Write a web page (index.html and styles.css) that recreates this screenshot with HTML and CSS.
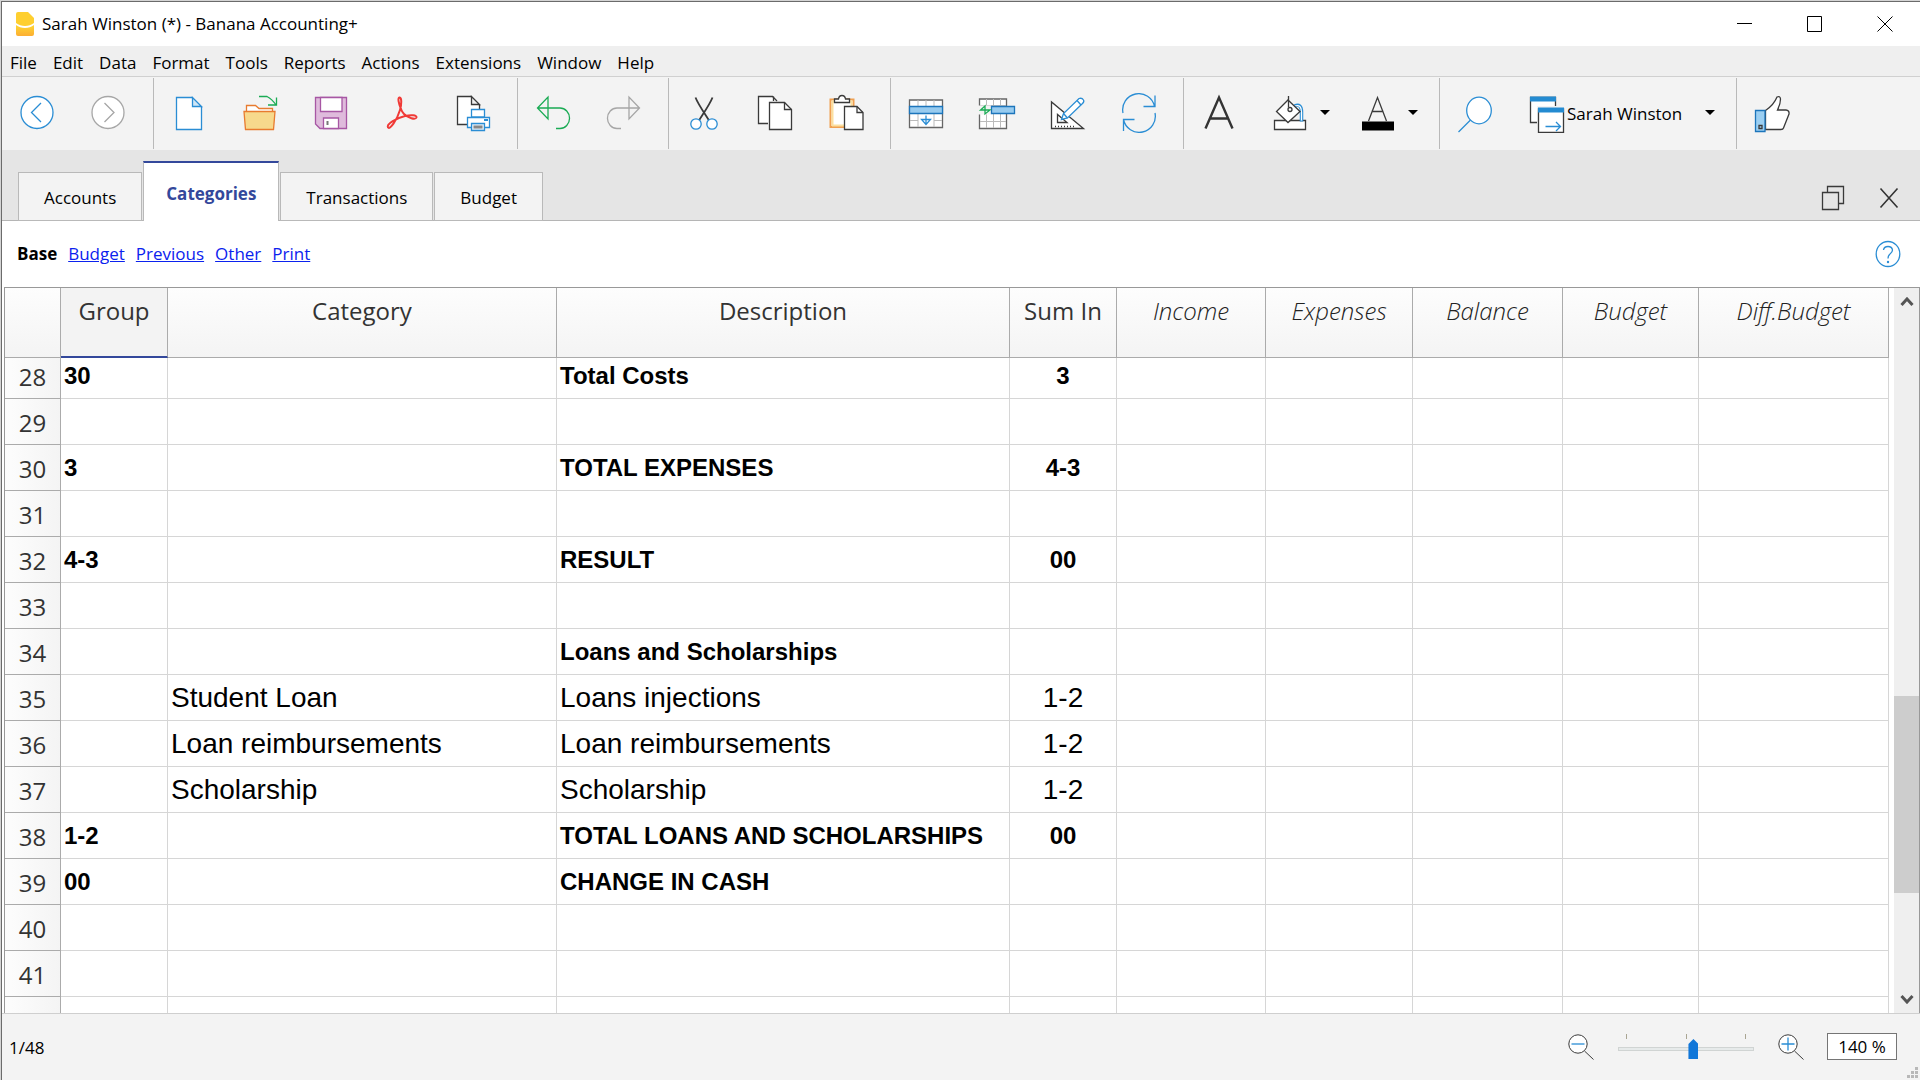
FILE: index.html
```html
<!DOCTYPE html>
<html lang="en">
<head>
<meta charset="utf-8">
<title>Sarah Winston (*) - Banana Accounting+</title>
<link rel="stylesheet" href="styles.css">
</head>
<body>
<div class="window">
  <header class="titlebar">
    <svg class="app-logo" width="18" height="24" viewBox="0 0 18 24" aria-hidden="true">
      <defs><linearGradient id="logo" x1="0" y1="0" x2="0" y2="1"><stop offset="0" stop-color="#fed732"/><stop offset="1" stop-color="#fcae33"/></linearGradient></defs>
      <path d="M2 0H12L18 6V11C13 15 5 15 0 11V2Q0 0 2 0Z" fill="#fecf30"/>
      <path d="M0 13C5 17 13 17 18 13V22Q18 24 16 24H2Q0 24 0 22Z" fill="url(#logo)"/>
    </svg>
    <h1 class="title">Sarah Winston (*) - Banana Accounting+</h1>
    <div class="window-controls">
      <button type="button" aria-label="Minimize"><svg width="16" height="16" viewBox="0 0 16 16"><path d="M0 7.5H15" /></svg></button>
      <button type="button" aria-label="Maximize"><svg width="16" height="16" viewBox="0 0 16 16"><path d="M.5 .5H14.5V15.5H.5Z"/></svg></button>
      <button type="button" aria-label="Close"><svg width="16" height="16" viewBox="0 0 16 16"><path d="M.5 .5L15.5 15.5M15.5 .5L.5 15.5"/></svg></button>
    </div>
  </header>

  <nav class="menubar" aria-label="Main menu">
    <button type="button">File</button><button type="button">Edit</button><button type="button">Data</button><button type="button">Format</button><button type="button">Tools</button><button type="button">Reports</button><button type="button">Actions</button><button type="button">Extensions</button><button type="button">Window</button><button type="button">Help</button>
  </nav>

  <div class="toolbar" role="toolbar" aria-label="Tools">
    <div class="group">
      <button class="tool" type="button" aria-label="Back"><svg viewBox="0 0 40 40"><g class="blue"><circle cx="20" cy="19.500" r="16" fill="#fff"/><path d="M24 10L14.500 19.500L24 29"/></g></svg></button>
      <button class="tool" type="button" aria-label="Forward"><svg viewBox="0 0 40 40"><g class="gray"><circle cx="20" cy="19.500" r="16" fill="#fff"/><path d="M16.500 10L26 19.500L16.500 29"/></g></svg></button>
    </div>
    <div class="group">
      <button class="tool" type="button" aria-label="New"><svg viewBox="0 0 40 40"><path class="blue" fill="#fff" d="M7.500 4.500H23L32.500 14V36.500H7.500Z"/><path class="blue" fill="#cfe6f6" d="M23.500 4.500V13.500H32.500Z"/></svg></button>
      <button class="tool" type="button" aria-label="Open"><svg viewBox="0 0 40 40"><path class="orange" fill="#fff" d="M6.500 18V12.500H15.500L19 15.500H32.500V19"/><path class="orange" fill="#f7d98c" d="M4 18.500H35L33.500 36.500H5.500Z"/><path class="green" d="M19 3.500H27Q32 6 36 12M28 12H36.500V4.500"/></svg></button>
      <button class="tool" type="button" aria-label="Save"><svg viewBox="0 0 40 40"><path class="purple" fill="#dfbbdc" d="M4.500 4.500H35.500V35.500H9L4.500 31Z"/><path class="purple" fill="#fff" d="M9.500 4.500H31V18.500H9.500Z"/><path class="purple" fill="#fff" d="M12.500 25H27.500V35.500H12.500Z"/><path d="M15.500 28h2v4h-2z" fill="#777"/></svg></button>
      <button class="tool" type="button" aria-label="Export to PDF"><svg viewBox="0 0 40 40"><path class="red" d="M19 16C16.500 10 15.500 5 17.500 4.500C20 4 19.500 12 18 17C15 27 8 37 6 34.500C4 31 15 25 23 23C29 21.500 35 22 34.500 24.500C33.500 27 26 25 22 21C20.500 19.500 19.500 17.500 19 16Z"/></svg></button>
      <button class="tool" type="button" aria-label="Print"><svg viewBox="0 0 40 40"><path class="dark" fill="#fff" d="M4.500 3.500H18L26.500 12V31.500H4.500Z"/><path class="dark" fill="#eee" d="M18.500 3.500V11.500H26.500Z"/><g class="blue"><path fill="#fff" d="M18.500 16.500H31.500V24H18.500ZM14.500 24.500H36.500V34.500H14.500Z"/><path fill="#e2eef7" d="M18.500 30.500H31.500V37.500H18.500Z"/><path d="M31 27H35" stroke-width="2"/></g><path d="M20.500 32.500h9v3h-9z" fill="#888"/></svg></button>
    </div>
    <div class="group">
      <button class="tool" type="button" aria-label="Undo"><svg viewBox="0 0 40 40"><path class="green" d="M15 4V26L4.500 15ZM4.500 15H27A9.500 10.200 0 0 1 27 35.500H23"/></svg></button>
      <button class="tool" type="button" aria-label="Redo"><svg viewBox="0 0 40 40"><path class="gray" d="M25 4V26L35.500 15ZM35.500 15H13A9.500 10.200 0 0 0 13 35.500H17"/></svg></button>
    </div>
    <div class="group">
      <button class="tool" type="button" aria-label="Cut"><svg viewBox="0 0 40 40"><path class="dark thick" d="M11.500 4.500C14 11 21 21 25 27.500M28.500 4.500C26 11 19 21 15 27.500"/><g class="blue"><circle cx="12" cy="31" r="5.200" fill="#fff"/><circle cx="28" cy="31" r="5.200" fill="#fff"/></g></svg></button>
      <button class="tool" type="button" aria-label="Copy"><svg viewBox="0 0 40 40"><g class="dark"><path fill="#fff" d="M13 30.500H3.500V3.500H17.500L22 8"/><path d="M18.500 3.500V8"/><path fill="#fff" d="M14.500 9.500H29.500L36.500 16.500V36.500H14.500Z"/><path d="M29.500 9.500V16.500H36.500"/></g></svg></button>
      <button class="tool" type="button" aria-label="Paste"><svg viewBox="0 0 40 40"><path d="M4.500 6.500H27.500V34H4.500Z" fill="#fff" stroke="#f0a050" stroke-width="2"/><path d="M6.500 32.500V8.500H25.500V13M6 32.500H18" fill="none" stroke="#fbe0a0" stroke-width="2"/><g class="dark"><path fill="#fff" d="M8.500 9.500V6H12.500Q13 2.500 16 2.500T19.500 6H23.500V9.500Z"/><path fill="#fff" d="M18.500 13.500H31L37 19.500V36.500H18.500Z"/><path d="M31 13.500V19.500H37"/></g></svg></button>
    </div>
    <div class="group">
      <button class="tool" type="button" aria-label="Insert rows"><svg viewBox="0 0 40 40"><path class="mid" fill="#fff" d="M3.500 7H36.500V34.500H3.500Z"/><path class="soft" d="M12 7V13M20 7V13M28 7V13M12 21V34M28 21V34M4 27.500H12M28 27.500H36"/><path d="M3.500 13.500H36.500V20.500H3.500Z" fill="#97cbef" stroke="#1c75bb" stroke-width="1.300"/><path class="blue" d="M20 22.500V31.500M15.500 26.500H24.500L20 31.500Z"/></svg></button>
      <button class="tool" type="button" aria-label="Shift cells"><svg viewBox="0 0 40 40"><path class="mid" fill="#fff" d="M2.500 6H29.500V35.500H2.500Z"/><path class="soft" d="M9.500 6V35M16.500 6V35M23.500 6V35M3 12.500H29M3 28.500H29"/><path d="M1 12.500h13v9H1z" fill="#f3f3f3"/><path d="M14.500 13.500H37.500V20.500H14.500Z" fill="#97cbef" stroke="#1c75bb" stroke-width="1.300"/><path class="green" d="M13 17H3.500L8 13V21Z"/></svg></button>
      <button class="tool" type="button" aria-label="Edit layout"><svg viewBox="0 0 40 40"><path class="dark" fill="#fff" d="M3.500 9V35.500H35.500Z"/><path class="dark" d="M9.500 21.500V29.500H19Z"/><path class="dark" d="M7 33.500H26" stroke-dasharray="1 2"/><path class="blue" fill="#fff" d="M13.500 26.500L15.500 20.500L31 5.500Q34 4.500 35.500 7Q36.500 8.500 34.500 10.500L19.500 25Z"/><path class="blue" d="M15.500 20.500L19.500 25M29 7.500L33 12"/></svg></button>
      <button class="tool" type="button" aria-label="Recalculate"><svg viewBox="0 0 40 40"><path class="blue" d="M4 20A16 16 0 0 1 35.500 13.500M24.500 13.500H36V2.500M36 20A16 16 0 0 1 4.500 26.500M15.500 26.500H4.500V38"/></svg></button>
    </div>
    <div class="group">
      <button class="tool" type="button" aria-label="Font"><svg viewBox="0 0 40 40"><path d="M6.500 35.500L20 4.500L33.500 35.500M11.500 25.500H28.500" fill="none" stroke="#333" stroke-width="2.400"/></svg></button>
      <button class="tool split" type="button" aria-label="Background colour"><svg viewBox="0 0 40 40"><path class="dark" fill="#fff" d="M4.500 27.500H35.500V36.500H4.500Z"/><path d="M24.500 13Q31.500 10 31.500 19V28.500" fill="none" stroke="#2a8dd4" stroke-width="3.500"/><path d="M25 13Q31.500 11 31.500 19V27.500" fill="none" stroke="#fff" stroke-width="1.300"/><path class="dark" fill="#fff" d="M18 7L30 18.500L18 29.500L6.500 18.500Z"/><path class="dark" d="M18.500 3V14.500"/><circle class="dark" cx="20" cy="16.500" r="2"/></svg><i class="caret"></i></button>
      <button class="tool split" type="button" aria-label="Text colour"><svg viewBox="0 0 40 40"><path class="dark" d="M10.500 28L19.500 4.500L28.500 28M13.500 18.500H25.500"/><path d="M4 28.500H36V37.500H4Z" fill="#000"/></svg><i class="caret"></i></button>
    </div>
    <div class="group">
      <button class="tool" type="button" aria-label="Search"><svg viewBox="0 0 40 40"><g class="blue"><ellipse cx="24" cy="17.500" rx="12.300" ry="13.300" fill="#fff"/><path d="M15.500 27L3.500 39"/></g></svg></button>
      <button class="tool window-switch" type="button"><svg viewBox="0 0 40 40"><path class="dark" fill="#fff" d="M4.500 4.500H29.500V29.500H4.500Z"/><path d="M4 3.500H30V8.500H4Z" fill="#248bd1"/><path d="M11 13H39V40H11Z" fill="#f3f3f3"/><path class="dark" fill="#fff" d="M12.500 16H37.500V39.500H12.500Z"/><path d="M12 14.500H38V19.500H12Z" fill="#248bd1"/><path class="blue" d="M19.500 33.500H34.500M30 29L34.500 33.500L30 38"/></svg><span>Sarah Winston</span><i class="caret"></i></button>
    </div>
    <div class="group">
      <button class="tool" type="button" aria-label="Feedback"><svg viewBox="0 0 40 40"><path class="dark" fill="#fff" d="M13.500 17.500C18 14.500 23 9 25 4Q28 2.500 28.500 6Q28.500 11 25.500 17H34Q37.500 17.500 37 21L31.500 35Q31 36.500 29 36.500H13.500Z"/><path d="M3.500 17.500H13V38.500H3.500Z" fill="#9bcff2" stroke="#1c75bb" stroke-width="1.300"/><path class="dark" d="M7 32.500h3v3h-3z"/></svg></button>
    </div>
  </div>

  <div class="tabbar">
    <div class="tabs" role="tablist">
      <button type="button" role="tab">Accounts</button><button type="button" role="tab" class="active" aria-selected="true">Categories</button><button type="button" role="tab">Transactions</button><button type="button" role="tab">Budget</button>
    </div>
    <div class="tab-controls">
      <button type="button" aria-label="Restore"><svg width="24" height="26" viewBox="0 0 24 26"><path class="dark" d="M1.500 7.500H17.500V24.500H1.500ZM6.500 7V1.500H22.500V18.500H18"/></svg></button>
      <button type="button" aria-label="Close table"><svg width="20" height="22" viewBox="0 0 20 22"><path d="M1.500 1.500L18.500 20.500M18.500 1.500L1.500 20.500" fill="none" stroke="#333" stroke-width="1.600"/></svg></button>
    </div>
  </div>

  <main class="content">
    <nav class="views" aria-label="Views">
      <strong>Base</strong>
      <a href="#budget">Budget</a>
      <a href="#previous">Previous</a>
      <a href="#other">Other</a>
      <a href="#print">Print</a>
      <button class="help" type="button" aria-label="Help"><svg width="26" height="28" viewBox="0 0 26 28"><g class="blue"><ellipse cx="13" cy="14" rx="11.800" ry="12.500"/><path d="M8.500 10Q9 6.500 13 6.500T17.500 10Q17.500 12 15 14Q13 15.500 13 18.500"/></g><circle cx="13" cy="22" r="1.200" fill="#2a8dd4"/></svg></button>
    </nav>

    <div class="sheet">
      <div class="viewport">
        <table>
          <colgroup><col class="c-num"><col class="c-group"><col class="c-category"><col><col class="c-sum"><col class="c-income"><col class="c-expenses"><col class="c-balance"><col class="c-budget"><col class="c-diff"></colgroup>
          <thead>
            <tr><th class="corner"></th><th class="current" scope="col">Group</th><th scope="col">Category</th><th scope="col">Description</th><th scope="col">Sum In</th><th class="calc" scope="col">Income</th><th class="calc" scope="col">Expenses</th><th class="calc" scope="col">Balance</th><th class="calc" scope="col">Budget</th><th class="calc" scope="col">Diff.Budget</th></tr>
          </thead>
          <tbody>
            <tr class="bold clipped"><th scope="row">28</th><td>30</td><td></td><td>Total Costs</td><td class="mid-cell">3</td><td></td><td></td><td></td><td></td><td></td></tr>
            <tr><th scope="row">29</th><td></td><td></td><td></td><td></td><td></td><td></td><td></td><td></td><td></td></tr>
            <tr class="bold"><th scope="row">30</th><td>3</td><td></td><td>TOTAL EXPENSES</td><td class="mid-cell">4-3</td><td></td><td></td><td></td><td></td><td></td></tr>
            <tr><th scope="row">31</th><td></td><td></td><td></td><td></td><td></td><td></td><td></td><td></td><td></td></tr>
            <tr class="bold"><th scope="row">32</th><td>4-3</td><td></td><td>RESULT</td><td class="mid-cell">00</td><td></td><td></td><td></td><td></td><td></td></tr>
            <tr><th scope="row">33</th><td></td><td></td><td></td><td></td><td></td><td></td><td></td><td></td><td></td></tr>
            <tr class="bold"><th scope="row">34</th><td></td><td></td><td>Loans and Scholarships</td><td></td><td></td><td></td><td></td><td></td><td></td></tr>
            <tr><th scope="row">35</th><td></td><td>Student Loan</td><td>Loans injections</td><td class="mid-cell">1-2</td><td></td><td></td><td></td><td></td><td></td></tr>
            <tr><th scope="row">36</th><td></td><td>Loan reimbursements</td><td>Loan reimbursements</td><td class="mid-cell">1-2</td><td></td><td></td><td></td><td></td><td></td></tr>
            <tr><th scope="row">37</th><td></td><td>Scholarship</td><td>Scholarship</td><td class="mid-cell">1-2</td><td></td><td></td><td></td><td></td><td></td></tr>
            <tr class="bold"><th scope="row">38</th><td>1-2</td><td></td><td>TOTAL LOANS AND SCHOLARSHIPS</td><td class="mid-cell">00</td><td></td><td></td><td></td><td></td><td></td></tr>
            <tr class="bold"><th scope="row">39</th><td>00</td><td></td><td>CHANGE IN CASH</td><td></td><td></td><td></td><td></td><td></td><td></td></tr>
            <tr><th scope="row">40</th><td></td><td></td><td></td><td></td><td></td><td></td><td></td><td></td><td></td></tr>
            <tr><th scope="row">41</th><td></td><td></td><td></td><td></td><td></td><td></td><td></td><td></td><td></td></tr>
            <tr><th scope="row">42</th><td></td><td></td><td></td><td></td><td></td><td></td><td></td><td></td><td></td></tr>
          </tbody>
        </table>
      </div>
      <div class="scrollbar">
        <button type="button" aria-label="Scroll up"><svg width="14" height="10" viewBox="0 0 14 10"><path d="M1.500 8L7 2L12.500 8"/></svg></button>
        <div class="track-before"></div><div class="thumb"></div><div class="track-after"></div>
        <button type="button" aria-label="Scroll down"><svg width="14" height="10" viewBox="0 0 14 10"><path d="M1.500 2L7 8L12.500 2"/></svg></button>
      </div>
    </div>
  </main>

  <footer class="statusbar">
    <span class="position">1/48</span>
    <button class="zoom-btn" type="button" aria-label="Zoom out"><svg width="26" height="26" viewBox="0 0 26 26"><circle class="dark thin" cx="10" cy="10" r="9.200" fill="#fff"/><path class="dark thin" d="M16.500 17L25.500 25.500"/><path class="blue" d="M3.500 10H16.500"/></svg></button>
    <div class="zoom-slider">
      <div class="ticks"><i></i><i></i><i></i></div>
      <input type="range" min="0" max="100" value="56" aria-label="Zoom">
    </div>
    <button class="zoom-btn" type="button" aria-label="Zoom in"><svg width="26" height="26" viewBox="0 0 26 26"><circle class="dark thin" cx="10" cy="10" r="9.200" fill="#fff"/><path class="dark thin" d="M16.500 17L25.500 25.500"/><path class="blue" d="M3.500 10H16.500M10 3.500V16.500"/></svg></button>
    <input class="zoom-value" type="text" value="140 %" aria-label="Zoom level">
    <svg class="grip" width="12" height="12" viewBox="0 0 12 12" aria-hidden="true"><path fill="#b8b8b8" d="M8 0h3v3H8zM4 4h3v3H4zM8 4h3v3H8zM0 8h3v3H0zM4 8h3v3H4zM8 8h3v3H8z"/></svg>
  </footer>
</div>
</body>
</html>
```
FILE: styles.css
```css
* { box-sizing: border-box; }

body {
  margin: 0;
  font: 17px/24px "Open Sans", "Noto Sans", sans-serif;
  color: #000;
  background: #d4d4d4;
}

button {
  padding: 0;
  border: 0;
  background: none;
  font: inherit;
  color: inherit;
}

svg { display: block; flex: none; }

.blue, .gray, .green, .orange, .purple, .red, .dark, .mid, .soft { fill: none; stroke-width: 1.3; }
.blue { stroke: #2a8dd4; }
.gray { stroke: #a6a6a6; }
.green { stroke: #1aab54; }
.orange { stroke: #e87b2f; }
.purple { stroke: #a757a4; }
.red { stroke: #f03a37; stroke-width: 2; }
.dark { stroke: #3a3a3a; }
.mid { stroke: #666; }
.soft { stroke: #bbb; stroke-width: 1; }
.thick { stroke-width: 1.8; }
.thin { stroke-width: 1; }
[fill="#fff"] { fill: #fff; }
[fill="#cfe6f6"] { fill: #cfe6f6; }
[fill="#f7d98c"] { fill: #f7d98c; }
[fill="#dfbbdc"] { fill: #dfbbdc; }
[fill="#eee"] { fill: #eee; }
[fill="#e2eef7"] { fill: #e2eef7; }

.window {
  display: flex;
  flex-direction: column;
  height: calc(100vh - 1px);
  margin: 1px 0 0 1px;
  border: solid #6b6b6b;
  border-width: 1px 0 0 1px;
  background: #fff;
}

/* Title bar */
.titlebar {
  display: flex;
  align-items: center;
  height: 44px;
  padding: 0 21px 0 14px;
}
.app-logo { margin-right: 8px; }
.title { margin: 0; font-size: 17px; font-weight: 400; }
.window-controls { display: flex; gap: 54px; margin-left: auto; padding-right: 6px; }
.window-controls path { fill: none; stroke: #000; }

/* Menu bar */
.menubar {
  display: flex;
  align-items: center;
  gap: 16px;
  height: 31px;
  padding: 3px 0 0 8px;
  border-bottom: 1px solid #d0d0d0;
  background: #efefef;
}

/* Toolbar */
.toolbar {
  display: flex;
  height: 73px;
  padding: 1px 0;
  background: #f3f3f3;
}
.group {
  display: flex;
  padding-right: 8px;
  border-right: 1px solid #b9b9b9;
}
.group:first-child { padding-right: 9px; }
.group:last-child { border: 0; }
.tool {
  display: flex;
  align-items: flex-start;
  width: 71px;
  padding: 15px 0 0 15px;
}
.tool svg { width: 40px; height: 40px; }
.caret {
  flex: none;
  margin-top: 17px;
  border: solid transparent;
  border-width: 5px 5px 0;
  border-top-color: #000;
}
.split { gap: 10px; width: 88px; }
.window-switch { width: 217px; padding-right: 13px; }
.window-switch span { padding: 9px 0 0 1px; }
.window-switch .caret { margin-left: auto; }

/* Tabs */
.tabbar {
  display: flex;
  align-items: flex-end;
  height: 71px;
  padding-left: 16px;
  background: #e5e5e5;
  box-shadow: inset 0 -1px #b5b5b5;
}
.tabs { display: flex; align-items: flex-end; gap: 1px; }
.tabs button {
  height: 49px;
  padding: 2px 25px 0;
  border: 1px solid #b9b9b9;
  background: #f3f3f3;
}
.tabs .active {
  height: 60px;
  padding: 5px 22px 2px;
  border-top: 2px solid #33489b;
  border-bottom: 0;
  background: #fff;
  color: #33489b;
  font-weight: 700;
}
.tab-controls {
  display: flex;
  align-items: center;
  gap: 34px;
  height: 46px;
  margin-left: auto;
  padding-right: 21px;
}

/* View links */
.content { display: flex; flex: 1; flex-direction: column; min-height: 0; }
.views {
  display: flex;
  align-items: center;
  gap: 11px;
  height: 66px;
  padding: 0 19px 0 15px;
}
.views a { color: #0b22ee; }
.help { margin-left: auto; }

/* Grid */
.sheet {
  display: flex;
  flex: 1;
  min-height: 0;
  margin-left: 2px;
  border: 1px solid #999;
  border-bottom: 0;
}
.viewport { flex: 1; overflow: hidden; padding-right: 5px; }
table {
  width: 100%;
  border-collapse: separate;
  border-spacing: 0;
  table-layout: fixed;
}
.c-num { width: 56px; }
.c-group, .c-sum { width: 107px; }
.c-category { width: 389px; }
.c-income { width: 149px; }
.c-expenses { width: 147px; }
.c-balance { width: 150px; }
.c-budget { width: 136px; }
.c-diff { width: 190px; }

th { color: #333; font-size: 24px; font-weight: 400; line-height: 32px; }
thead th {
  height: 70px;
  padding: 7px 0 0;
  vertical-align: top;
  border: solid #ababab;
  border-width: 0 1px 1px 0;
  background: linear-gradient(#fdfdfd, #f4f4f4);
}
thead .current { border-bottom: 2px solid #33489b; background: #f3f3f3; }
thead .calc { color: #222; font-style: italic; font-weight: 300; }
tbody th {
  height: 46px;
  padding: 0 0 5px;
  vertical-align: bottom;
  border: solid #ababab;
  border-width: 0 1px 1px 0;
  background: linear-gradient(90deg, #fdfdfd, #f4f4f4);
}
td {
  padding: 0 3px 6px;
  vertical-align: bottom;
  border: solid #d6d6d6;
  border-width: 0 1px 1px 0;
  font: 28px/32px "Liberation Sans", Arial, sans-serif;
  white-space: nowrap;
}
.bold td { font-size: 24px; font-weight: 700; }
.clipped th { height: 41px; }
.mid-cell { text-align: center; }

/* Scroll bar */
.scrollbar {
  display: flex;
  flex-direction: column;
  width: 25px;
  background: #efefef;
}
.scrollbar button { display: flex; align-items: center; justify-content: center; height: 28px; }
.scrollbar path { fill: none; stroke: #555; stroke-width: 3; }
.track-before { flex: 380; }
.thumb { flex: 197; background: #cdcdcd; }
.track-after { flex: 92; }

/* Status bar */
.statusbar {
  display: flex;
  align-items: center;
  height: 67px;
  padding: 0 1px 1px 7px;
  border-top: 1px solid #cfcfcf;
  background: #f3f3f3;
}
.position { margin-right: auto; padding-top: 2px; }
.zoom-slider { width: 136px; margin: 0 24px; }
.ticks { display: flex; justify-content: space-between; height: 5px; padding: 0 8px; }
.ticks i { width: 1px; background: #a9a592; }
.zoom-slider input {
  display: block;
  width: 100%;
  height: 20px;
  margin: 0;
  appearance: none;
  background: none;
}
.zoom-slider input::-webkit-slider-runnable-track {
  height: 4px;
  border: 1px solid #d0d4d3;
  background: #e6eaea;
}
.zoom-slider input::-webkit-slider-thumb {
  appearance: none;
  width: 10px;
  height: 20px;
  margin-top: -9px;
  background: #1177d9;
  clip-path: polygon(0 5px, 5px 0, 100% 5px, 100% 100%, 0 100%);
}
.zoom-value {
  width: 70px;
  height: 27px;
  margin: 0 10px 0 23px;
  padding: 0;
  border: 1px solid #757575;
  background: #fff;
  font: inherit;
  text-align: center;
}
.grip { align-self: flex-end; }
```
